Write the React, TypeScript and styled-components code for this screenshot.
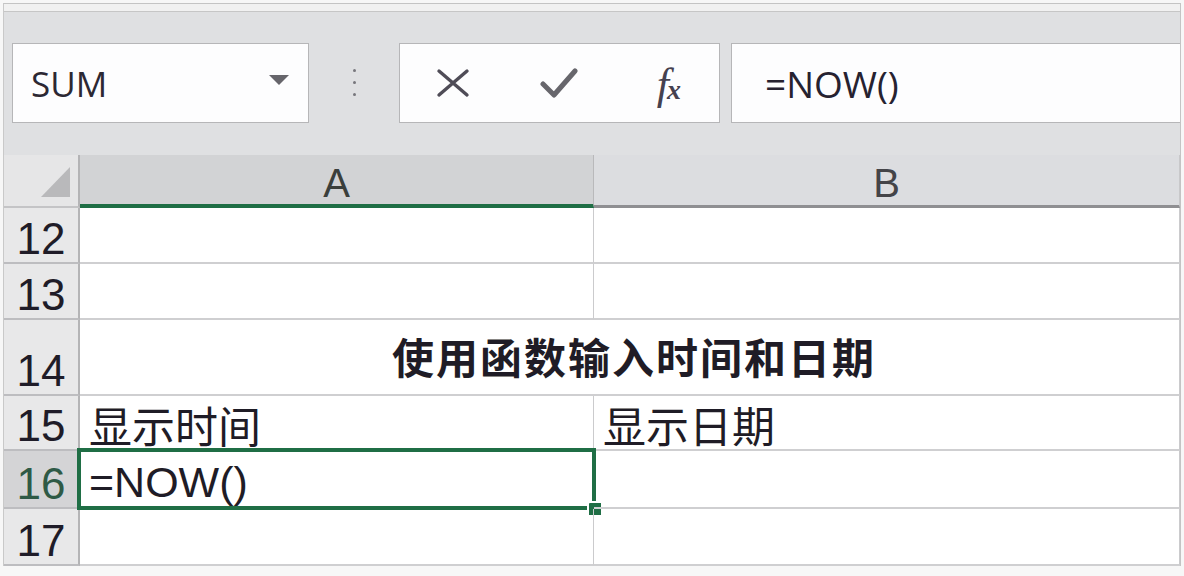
import React from 'react';
import styled, { createGlobalStyle } from 'styled-components';

const GlobalStyle = createGlobalStyle`
  html, body {
    margin: 0;
    padding: 0;
    background: #f7f7f7;
  }
  * {
    box-sizing: border-box;
  }
`;

const GREEN = '#1f6e45';

const Page = styled.div`
  width: 1184px;
  height: 576px;
  overflow: hidden;
  padding: 3px 3px 0 3px;
  background: #f7f7f7;
`;

const Frame = styled.div`
  border-top: 1px solid #c4c4c4;
  border-left: 1px solid #c9c9c9;
  border-right: 1px solid #c4c4c4;
  display: flex;
  flex-direction: column;
`;

const TopStrip = styled.div`
  height: 8px;
  background: #f1f1f1;
  border-bottom: 1px solid #c6c6c6;
`;

const FormulaBar = styled.div`
  height: 143px;
  background: #dfe0e2;
  display: flex;
  align-items: flex-start;
  padding: 31px 0 0 8px;
`;

const Box = styled.div`
  height: 80px;
  background: #fdfdfe;
  border: 1px solid #b6b6b8;
  display: flex;
  align-items: center;
`;

const NameBox = styled(Box)`
  width: 297px;
  justify-content: space-between;
  padding: 0 19px 0 18px;
  font-family: 'Open Sans', 'Liberation Sans', sans-serif;
  font-size: 35px;
  color: #2c2833;
`;

const DropArrow = styled.span`
  width: 0;
  height: 0;
  border-left: 10px solid transparent;
  border-right: 10px solid transparent;
  border-top: 10px solid #66656b;
  margin-bottom: 6px;
`;

const Dots = styled.div`
  width: 90px;
  display: flex;
  flex-direction: column;
  align-items: center;
  gap: 9px;
  padding-top: 26px;
  align-self: stretch;
`;

const Dot = styled.span`
  width: 3px;
  height: 3px;
  border-radius: 50%;
  background: #77767c;
`;

const ButtonBox = styled(Box)`
  width: 321px;
`;

const IconButton = styled.div`
  flex: 1;
  height: 100%;
  display: flex;
  align-items: center;
  justify-content: center;
`;

const Fx = styled.span`
  font-family: 'Liberation Serif', 'DejaVu Serif', serif;
  font-style: italic;
  font-size: 44px;
  color: #45414f;
  margin-left: 6px;
  margin-top: 4px;
  line-height: 1;

  & sub {
    font-size: 28px;
    font-weight: bold;
    vertical-align: baseline;
    margin-left: -2px;
  }
`;

const FormulaInput = styled(Box)`
  flex: 1;
  margin-left: 11px;
  border-right: none;
  padding-left: 33px;
  font-family: 'Open Sans', 'Liberation Sans', sans-serif;
  font-size: 37px;
  color: #262230;
`;

const Sheet = styled.div`
  display: flex;
  flex-direction: column;
  background: #ffffff;
`;

const Row = styled.div<{ h: number }>`
  height: ${p => p.h}px;
  display: grid;
  grid-template-columns: 76px 514px 1fr;
  grid-template-rows: ${p => p.h}px;
`;

const HeaderRow = styled(Row)`
  background: #dcdde0;
`;

const Corner = styled.div`
  background: #e6e6e7;
  border-right: 2px solid #b4b4b6;
  border-bottom: 2px solid #c4c4c6;
  display: flex;
  align-items: flex-end;
  justify-content: flex-end;
  padding: 0 8px 9px 0;
`;

const ColHead = styled.div<{ selected?: boolean }>`
  background: ${p => (p.selected ? '#d2d3d5' : '#dcdde0')};
  border-right: 1px solid ${p => (p.selected ? '#b9b9bb' : '#c8c8ca')};
  border-bottom: ${p => (p.selected ? `4px solid ${GREEN}` : '3px solid #8f8f92')};
  display: flex;
  align-items: center;
  justify-content: center;
  padding-top: 6px;
  font-family: 'Liberation Sans', Arial, sans-serif;
  font-size: 40px;
  line-height: 1;
  color: ${p => (p.selected ? '#3b3f3c' : '#444448')};
`;

const RowHead = styled.div<{ selected?: boolean }>`
  background: ${p => (p.selected ? '#d4d4d6' : '#e8e8e9')};
  border-right: 2px solid #b4b4b6;
  border-bottom: 2px solid #bdbdc0;
  display: flex;
  align-items: flex-end;
  justify-content: center;
  padding-bottom: 1px;
  font-family: 'Liberation Sans', Arial, sans-serif;
  font-size: 44px;
  line-height: 1;
  color: ${p => (p.selected ? '#2f5a46' : '#1f1c28')};
`;

const Cell = styled.div<{ span?: boolean; center?: boolean; bold?: boolean }>`
  position: relative;
  grid-column: ${p => (p.span ? 'span 2' : 'auto')};
  border-right: 1px solid #cbcbcd;
  border-bottom: 2px solid #cfcfd1;
  display: flex;
  align-items: ${p => (p.center ? 'center' : 'flex-end')};
  justify-content: ${p => (p.center ? 'center' : 'flex-start')};
  padding: 0 0 1px 9px;
  font-family: 'Liberation Sans', 'Noto Sans CJK SC', sans-serif;
  font-size: ${p => (p.bold ? 42 : 43)}px;
  font-weight: ${p => (p.bold ? 700 : 400)};
  letter-spacing: ${p => (p.bold ? 2 : 0)}px;
  line-height: 1.1;
  color: #1f1c26;
  white-space: nowrap;
`;

const CjkText = styled.span`
  font-family: 'Noto Sans CJK SC', sans-serif;
`;

const Selection = styled.div`
  position: absolute;
  top: -3px;
  left: -3px;
  right: -3px;
  bottom: -3px;
  border: 4px solid ${GREEN};
  pointer-events: none;
`;

const FillHandle = styled.span`
  position: absolute;
  right: -9px;
  bottom: -9px;
  width: 14px;
  height: 14px;
  background: ${GREEN};
  border-left: 2px solid #ffffff;
  border-top: 2px solid #ffffff;
  border-radius: 3px 0 0 0;
`;

const CloseIcon = () => (
  <svg width="34" height="30" viewBox="0 0 34 30">
    <path d="M3 3 L31 27 M31 3 L3 27" stroke="#4f4c57" strokeWidth="3.4" strokeLinecap="round" />
  </svg>
);

const CheckIcon = () => (
  <svg width="38" height="32" viewBox="0 0 38 32">
    <path d="M3 17 L14 28 L35 4" stroke="#67666c" strokeWidth="5" fill="none" strokeLinecap="round" strokeLinejoin="round" />
  </svg>
);

const CornerTriangle = () => (
  <svg width="29" height="30" viewBox="0 0 29 30">
    <polygon points="29,0 29,30 0,30" fill="#b9b9bb" />
  </svg>
);

const rows = [
  { n: 12, h: 56 },
  { n: 13, h: 56 },
  { n: 14, h: 76 },
  { n: 15, h: 55 },
  { n: 16, h: 58 },
  { n: 17, h: 57 },
];

export default function App() {
  return (
    <Page>
      <GlobalStyle />
      <Frame>
        <TopStrip />
        <FormulaBar>
          <NameBox>
            <span>SUM</span>
            <DropArrow />
          </NameBox>
          <Dots>
            <Dot />
            <Dot />
            <Dot />
          </Dots>
          <ButtonBox>
            <IconButton>
              <CloseIcon />
            </IconButton>
            <IconButton>
              <CheckIcon />
            </IconButton>
            <IconButton>
              <Fx>
                f<sub>x</sub>
              </Fx>
            </IconButton>
          </ButtonBox>
          <FormulaInput>=NOW()</FormulaInput>
        </FormulaBar>
        <Sheet>
          <HeaderRow h={53}>
            <Corner>
              <CornerTriangle />
            </Corner>
            <ColHead selected>A</ColHead>
            <ColHead>B</ColHead>
          </HeaderRow>
          {rows.map(r => (
            <Row key={r.n} h={r.h}>
              <RowHead selected={r.n === 16}>{r.n}</RowHead>
              {r.n === 14 ? (
                <Cell span center bold>
                  <CjkText>使用函数输入时间和日期</CjkText>
                </Cell>
              ) : r.n === 15 ? (
                <>
                  <Cell>
                    <CjkText>显示时间</CjkText>
                  </Cell>
                  <Cell>
                    <CjkText>显示日期</CjkText>
                  </Cell>
                </>
              ) : r.n === 16 ? (
                <>
                  <Cell>
                    =NOW()
                    <Selection>
                      <FillHandle />
                    </Selection>
                  </Cell>
                  <Cell />
                </>
              ) : (
                <>
                  <Cell />
                  <Cell />
                </>
              )}
            </Row>
          ))}
        </Sheet>
      </Frame>
    </Page>
  );
}
